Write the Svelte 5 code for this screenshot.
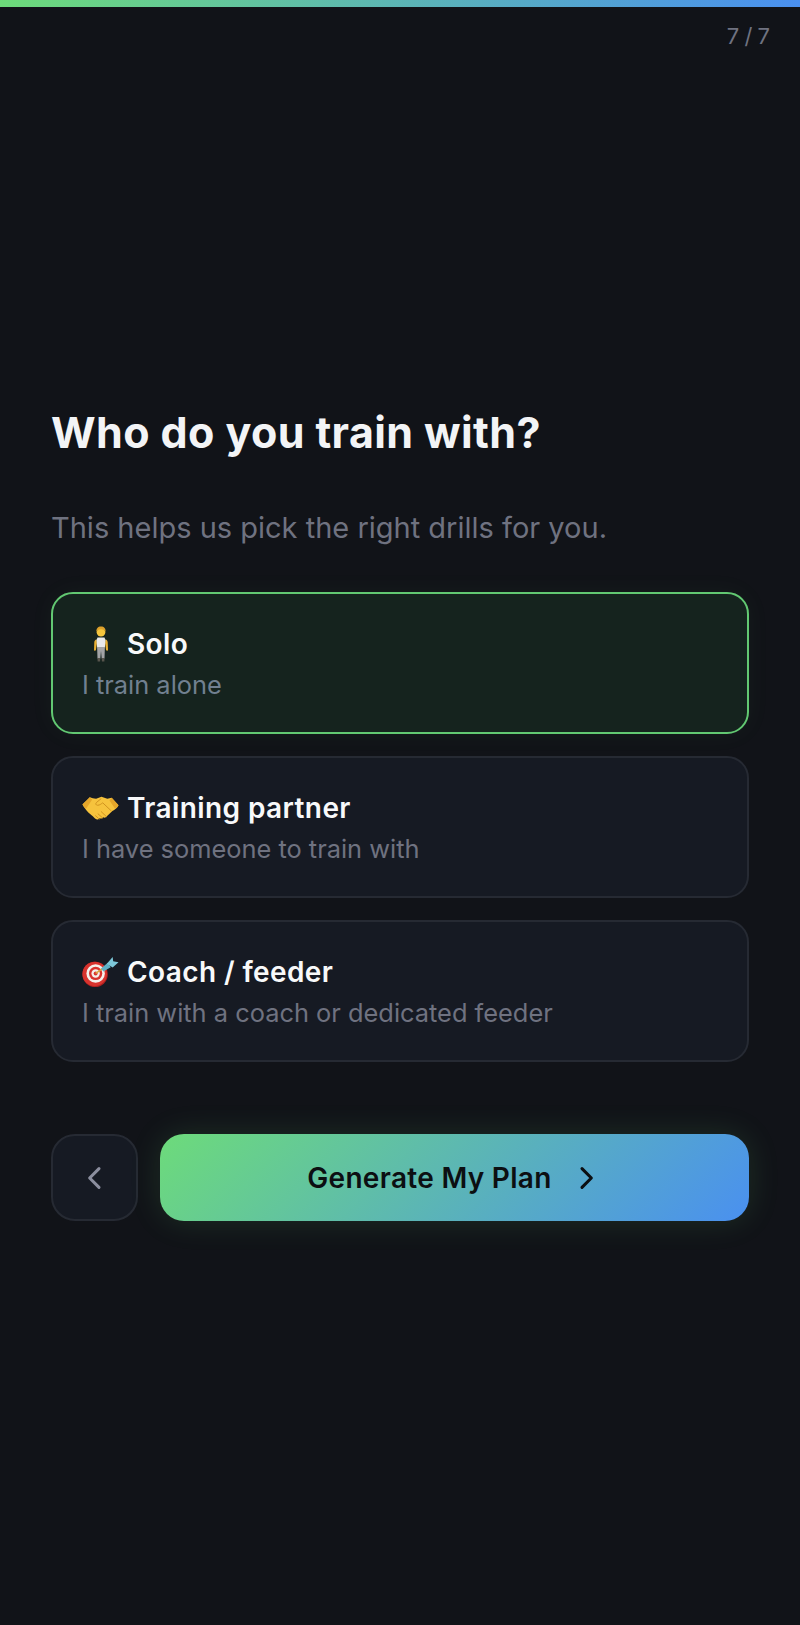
<script lang="ts">
	const options = [
		{ id: 'solo', title: 'Solo', desc: 'I train alone' },
		{ id: 'partner', title: 'Training partner', desc: 'I have someone to train with' },
		{ id: 'coach', title: 'Coach / feeder', desc: 'I train with a coach or dedicated feeder' }
	];
	let selected = $state('solo');
</script>

<div class="page">
	<div class="progress"></div>
	<div class="counter">7 / 7</div>

	<main>
		<h1>Who do you train with?</h1>
		<p class="lead">This helps us pick the right drills for you.</p>

		<div class="options">
			{#each options as opt}
				<button class="option" class:active={selected === opt.id} onclick={() => (selected = opt.id)}>
					<span class="opt-title">
						<span class="emoji">
							{#if opt.id === 'solo'}
								<svg viewBox="0 0 16 36" width="16" height="36">
									<path d="M3.600 13.500c-1.500.3-2.200 1.300-2.300 2.800l-.3 7.500c0 1.300 1.800 1.300 2 0l.9-6.800zM12.400 13.500c1.500.3 2.200 1.300 2.300 2.800l.3 7.500c0 1.300-1.800 1.300-2 0l-.9-6.800z" fill="#e9b032" />
									<circle cx="8" cy="6.300" r="4.300" fill="#f4c53d" />
									<path d="M3.400 6C3 2.500 5 .5 8 .5s5 2 4.600 5.500C12 4 10.500 3.200 8 3.200S4 4 3.400 6z" fill="#dda02b" />
									<path d="M4.500 11.500h7l1 2.500-.6 7.500H4.100L3.500 14z" fill="#e8e9ea" />
									<path d="M4.100 21h7.800l-.4 11.500H8.700L8 25l-.7 7.500H4.500z" fill="#a2a3a5" />
									<path d="M4.500 32h2.800l-.2 3.500H4.600zM8.700 32h2.800l-.1 3.500H8.900z" fill="#57544c" />
								</svg>
							{:else if opt.id === 'partner'}
								<svg viewBox="0 0 38 26" width="38" height="26">
									<path d="M.5 9.500 8 2c2 .6 4 1.400 6.500 1.400L20 1.500l6 2c1.500 0 3-.4 4.500-.9l7 7.500c-1.500 2.800-3.800 4.800-6.300 6l-6.200 6c-1 1-2.300 1.100-3.200.5-.8 1.400-2.500 1.700-3.700.8-1 1.500-3.600 2-5 .2-1-1.300-1.800-1.900-3.300-3.100l-3.300-3C4 15 2 12.500.5 9.500z" fill="#f6c33d" />
									<path d="M.5 9.500 8 2l2.500 2.200L4 14c-1.600-1.300-2.700-2.800-3.500-4.500zM37.500 10.100l-7-7.500-2.300 2.600 6 8.800c1.400-1 2.500-2.300 3.300-3.900z" fill="#e5a62a" />
									<path d="M19.500 3.500 15 7.200c-1.500 1.300-.8 3 1 3 2.300 0 3.700-1.500 5.300-2.500l8.800 8.300" fill="none" stroke="#cf921f" stroke-width="1" stroke-linecap="round" />
									<path d="M25 21.800 19.700 16.700M21.300 23.300 16.500 19M17.600 24.300 14 21" fill="none" stroke="#cf921f" stroke-width="1" stroke-linecap="round" />
								</svg>
							{:else}
								<svg viewBox="0 0 38 32" width="38" height="32">
									<circle cx="13.500" cy="18.500" r="13" fill="#a81f1f" />
									<circle cx="13" cy="18" r="12.600" fill="#d8332e" />
									<circle cx="14" cy="17.500" r="9.500" fill="#f5f1ec" />
									<circle cx="14" cy="17.500" r="6.800" fill="#d8332e" />
									<circle cx="14" cy="17.500" r="4.300" fill="#f5f1ec" />
									<circle cx="14" cy="17.500" r="2" fill="#d8332e" />
									<path d="M14 17.500 22 12" stroke="#d9a63a" stroke-width="1.500" />
									<path d="M19.500 12.500l7-6 3 4.500-7.500 4.500z" fill="#5fb0c6" />
									<path d="M25.500 7.500 31.500.5 32 5l5.500 1-6 5.500z" fill="#7cc7d8" />
								</svg>
							{/if}
						</span>
						{opt.title}
					</span>
					<span class="opt-desc">{opt.desc}</span>
				</button>
			{/each}
		</div>

		<div class="actions">
			<button class="back" aria-label="Back">
				<svg viewBox="0 0 24 24" width="32" height="32" fill="none" stroke="#8b8e9e" stroke-width="2.300" stroke-linecap="round" stroke-linejoin="round">
					<path d="M15 5l-7 7 7 7" />
				</svg>
			</button>
			<button class="next">
				Generate My Plan
				<svg viewBox="0 0 24 24" width="32" height="32" fill="none" stroke="#0c0f12" stroke-width="2.300" stroke-linecap="round" stroke-linejoin="round">
					<path d="M9 5l7 7-7 7" />
				</svg>
			</button>
		</div>
	</main>
</div>

<style>
	:global(body) {
		margin: 0;
		background: #111318;
	}
	.page {
		height: 1625px;
		display: flex;
		flex-direction: column;
		background: #111318;
		font-family: Inter, sans-serif;
		overflow: hidden;
	}
	.progress {
		height: 7px;
		flex: none;
		background: linear-gradient(90deg, #6ddb7a, #4a90f0);
	}
	.counter {
		flex: none;
		margin: 16px 30px 0 0;
		text-align: right;
		font-size: 22px;
		line-height: 27px;
		word-spacing: -1px;
		color: #6f7280;
	}
	main {
		flex: 1;
		padding: 0 51px;
		display: flex;
		flex-direction: column;
		justify-content: center;
		margin-top: -48px;
	}
	h1 {
		margin: 0 0 47px;
		font-size: 43px;
		line-height: 53px;
		font-weight: 700;
		letter-spacing: 0.4px;
		color: #f3f4f6;
	}
	.lead {
		margin: 0 0 43px;
		font-size: 29px;
		line-height: 43px;
		color: #6f7280;
	}
	.options {
		display: flex;
		flex-direction: column;
		gap: 22px;
	}
	.option {
		height: 142px;
		box-sizing: border-box;
		padding: 30px 29px;
		display: flex;
		flex-direction: column;
		align-items: flex-start;
		text-align: left;
		background: #161a23;
		border: 2px solid #262a33;
		border-radius: 22px;
		font-family: inherit;
		cursor: pointer;
	}
	.option.active {
		background: #15231e;
		border-color: #62c872;
		box-shadow: 0 0 24px rgba(109, 219, 122, 0.05);
	}
	.opt-title {
		display: flex;
		align-items: center;
		gap: 8px;
		font-size: 28px;
		line-height: 40px;
		font-weight: 600;
		letter-spacing: 0.4px;
		color: #f8f9fa;
	}
	.emoji {
		width: 37px;
		display: flex;
		justify-content: center;
		align-items: center;
	}
	.opt-desc {
		margin-top: 2px;
		font-size: 25.400px;
		line-height: 37px;
		color: #6f7280;
	}
	.active .opt-desc {
		color: #718090;
	}
	.actions {
		margin-top: 72px;
		display: flex;
		gap: 22px;
	}
	.back {
		width: 87px;
		height: 87px;
		flex: none;
		display: flex;
		align-items: center;
		justify-content: center;
		background: #161a23;
		border: 2px solid #262a33;
		border-radius: 24px;
		cursor: pointer;
	}
	.next {
		flex: 1;
		height: 87px;
		display: flex;
		align-items: center;
		justify-content: center;
		gap: 18px;
		border: none;
		border-radius: 24px;
		background: linear-gradient(135deg, #6ddb7a, #4a90f0 100%);
		box-shadow: 0 0 32px rgba(109, 219, 122, 0.14);
		font-family: inherit;
		font-size: 28px;
		font-weight: 600;
		letter-spacing: 0.3px;
		color: #0c0f12;
		cursor: pointer;
	}
</style>
